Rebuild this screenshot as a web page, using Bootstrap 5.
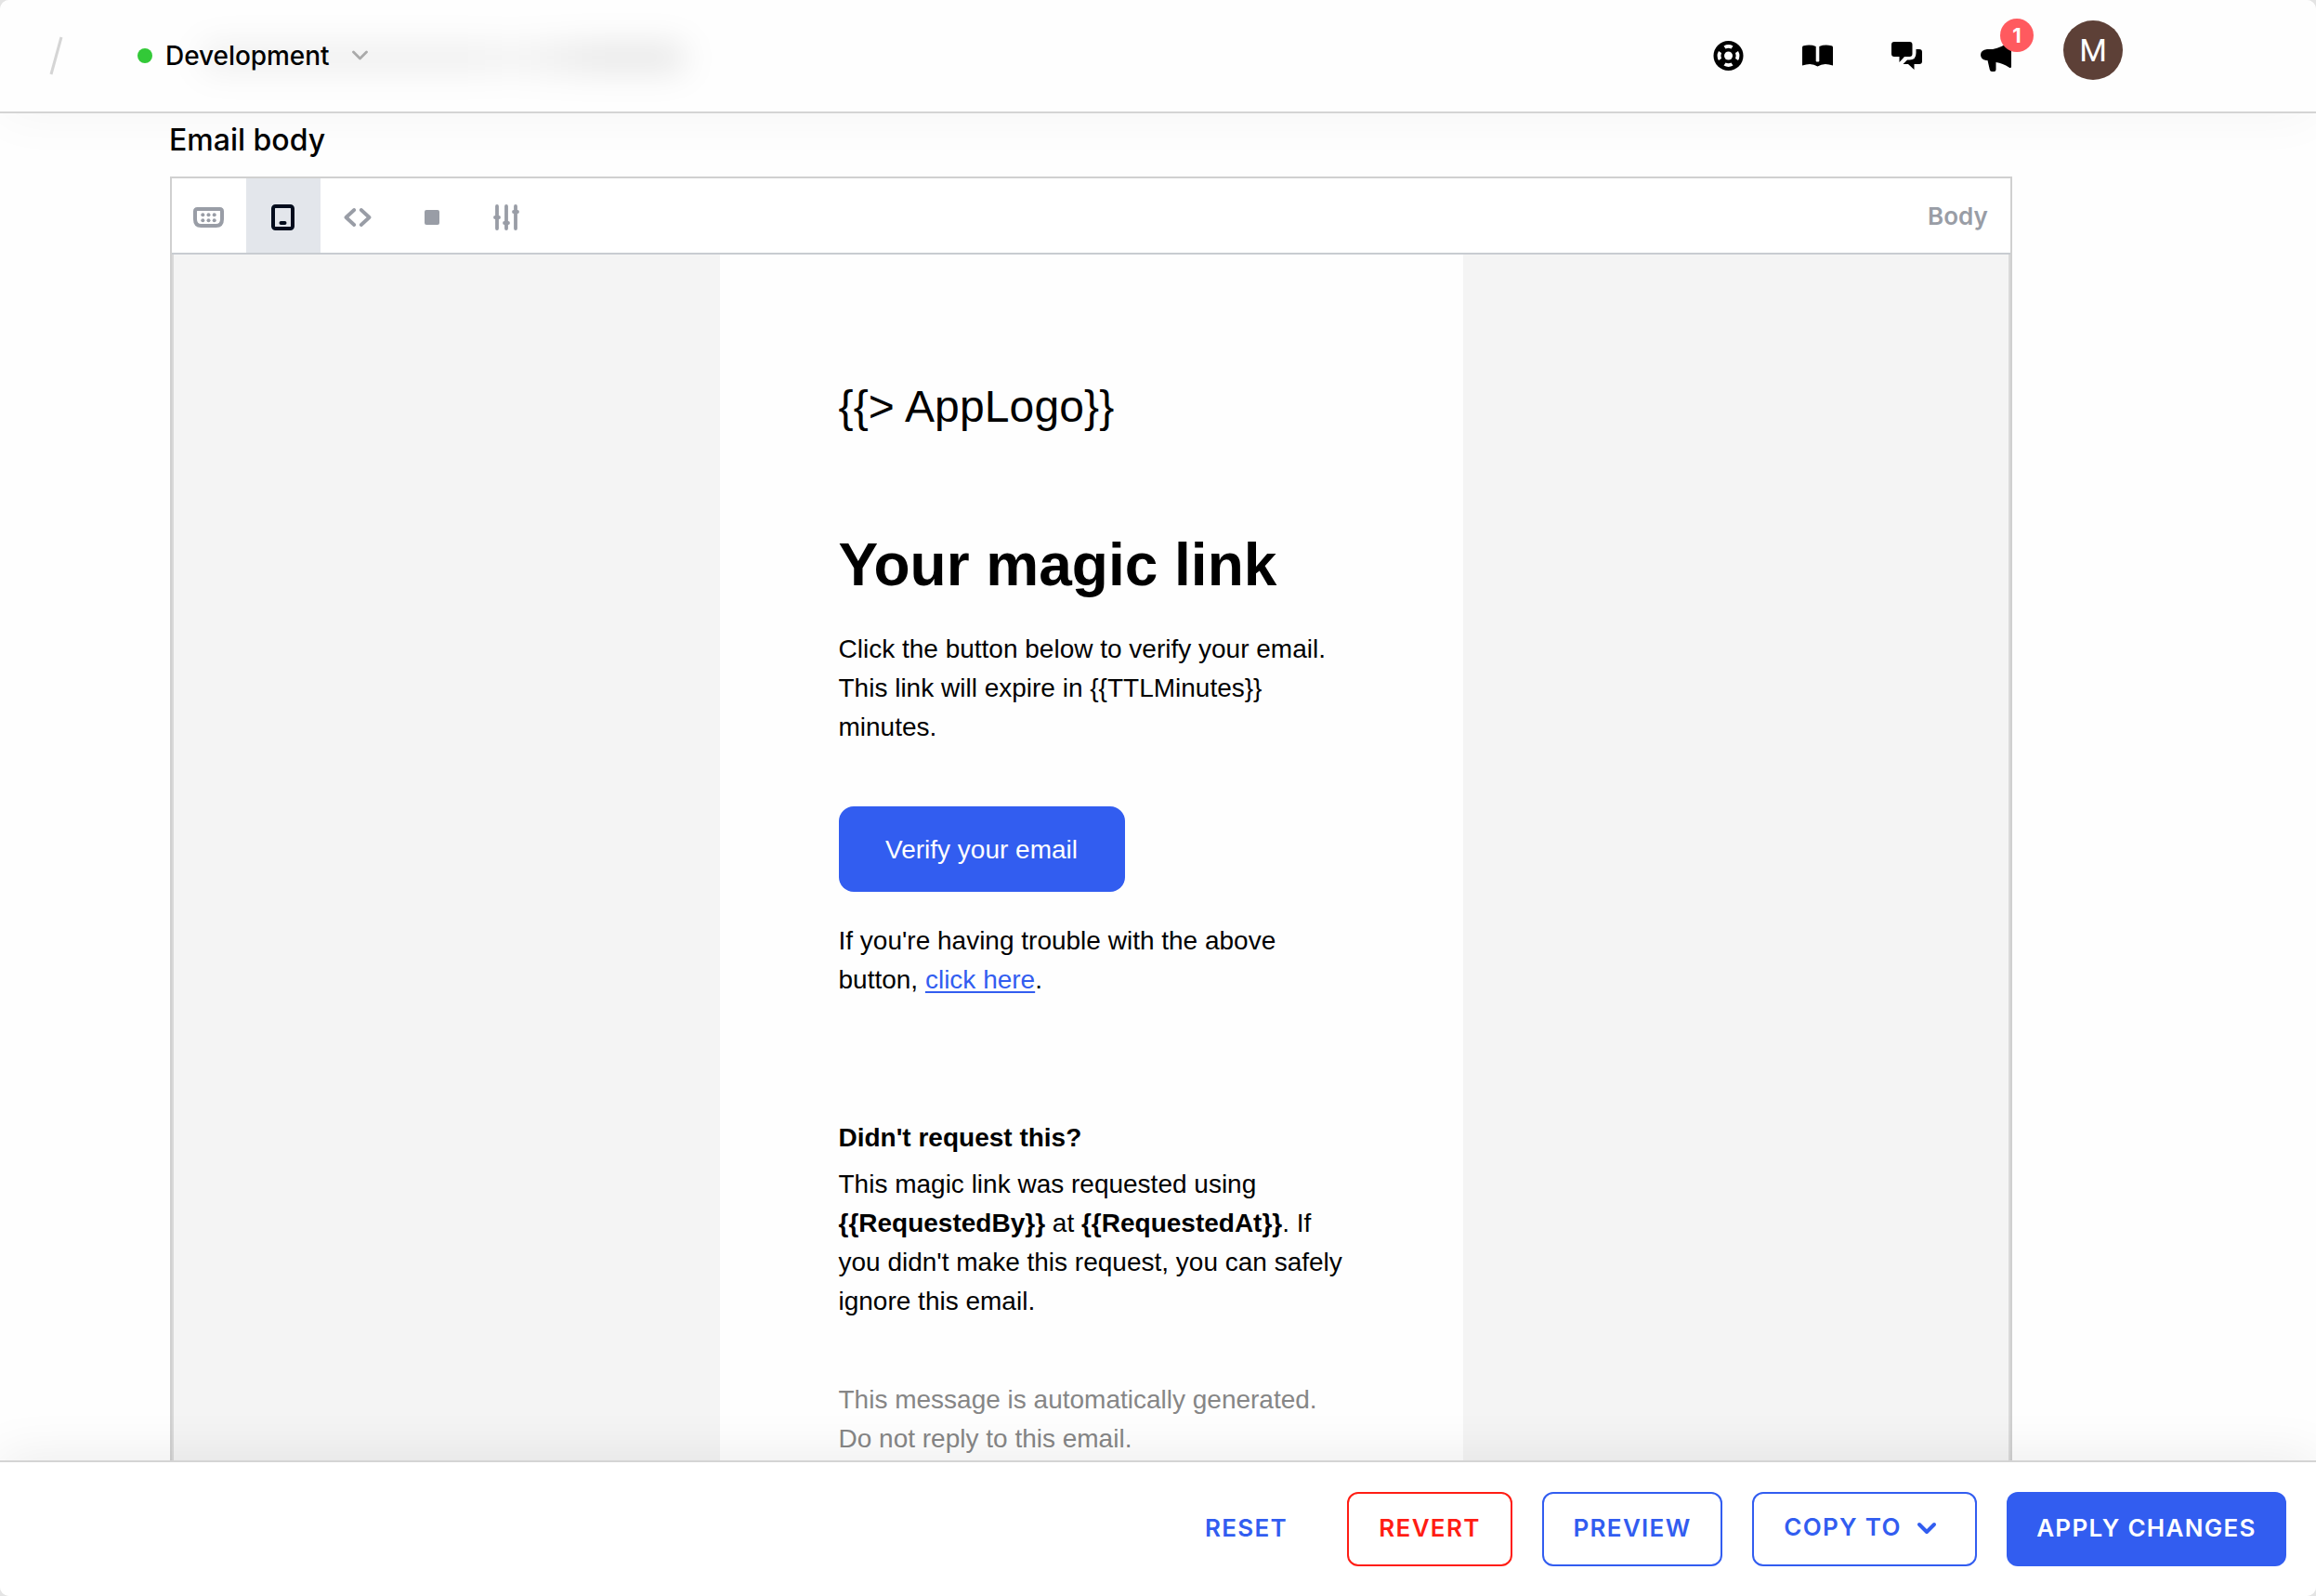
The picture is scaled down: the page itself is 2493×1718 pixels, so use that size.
<!DOCTYPE html>
<html lang="en">
<head>
<meta charset="utf-8">
<title>Email template editor</title>
<link href="https://cdn.jsdelivr.net/npm/bootstrap@5.3.0/dist/css/bootstrap.min.css" rel="stylesheet">
<script src="https://cdn.jsdelivr.net/npm/bootstrap@5.3.0/dist/js/bootstrap.bundle.min.js"></script>
<style>
:root{--brand:#325df0;--line:#d4d4d4;--muted:#999da6}
html{background:#e4e4e4}
body{width:2493px;height:1718px;overflow:hidden;border-radius:10px;background:#fefefe;color:#000;font-family:Inter,sans-serif;position:relative}
svg{display:block;flex:none}
.topbar{height:122px;border-bottom:2px solid var(--line);padding:0 208px 0 52px;box-shadow:0 4px 56px rgba(0,0,0,.04);position:relative;z-index:2;background:#fefefe}
.ghost-title{position:absolute;left:215px;top:46px;width:524px;height:32px;border-radius:16px;filter:blur(17px);background:linear-gradient(90deg,rgba(0,0,0,.06),rgba(0,0,0,.06) 55%,rgba(0,0,0,.045) 65%,rgba(0,0,0,.09) 82%,rgba(0,0,0,.09))}
.env{font-size:28px;font-weight:500;line-height:40px;margin-left:79px;position:relative}
.env-dot{width:16px;height:16px;border-radius:50%;background:#33c938;margin-right:14px}
.env-label{letter-spacing:-.05px}
.tools{gap:63px;position:relative}
.count-pill{position:absolute;left:21px;top:-23px;width:36px;height:36px;border-radius:50%;background:#ff5a5f;color:#fff;font-size:22px;font-weight:700;line-height:36px;text-align:center}
.avatar{width:64px;height:64px;border-radius:50%;background:#5d4037;color:#fff;font:400 34px/64px Roboto,sans-serif;text-align:center;margin:0 0 12px -7px}
.workspace{height:1450px;padding-left:183px;overflow:hidden}
.section-title{font-size:32px;font-weight:450;line-height:40px;margin:0 0 0 -1px;padding:9px 0 19px}
.editor{width:1983px;border:2px solid #d0d0d0;border-bottom:0}
.modes{height:82px;border-bottom:2px solid #c8ccd1;background:#fff;color:var(--muted)}
.mode{width:80px;height:80px;color:var(--muted);border:0;background:none;padding:3px 0 0}
.mode:first-child{padding-right:1px}
.mode.active{background:#e3e6eb;color:#030c1c;margin-left:-.5px}
.mode-name{font-size:26px;font-weight:600;padding:1px 24px 0 0;letter-spacing:.1px}
.preview{background:#f4f4f4;height:1298px;border:solid #d9d9d9;border-width:0 2px}
.mail{width:800px;background:#fefefe;padding:128px 128px 0 128px;font:28px/42px "Liberation Sans",Arial,sans-serif;margin-left:587.5px;white-space:nowrap}
.mail p{margin:0}
.mail-logo{font-size:48px;line-height:72px;letter-spacing:.15px}
.mail h1{font-size:64px;line-height:80px;font-weight:700;margin:94px 0 30px}
.mail-cta{width:308px;height:92px;border-radius:16px;background:var(--brand);color:#fff;font-size:28px;margin:64px 0 32px;padding:1px 0 0;border:0}
.mail a:not(.btn){color:var(--brand);text-underline-offset:3px;text-decoration-thickness:2px}
.mail .fine{color:#868686;margin-top:64px}
.mail .notice{margin-top:128px}
.actions{height:146px;border-top:2px solid var(--line);background:#fff;position:relative;z-index:2;padding:32px 32px 0 0;gap:32px;box-shadow:0 -4px 56px rgba(0,0,0,.075)}
.act{height:80px;border-radius:12px;border-width:2px;font-size:26px;font-weight:600;letter-spacing:1.3px;padding:0 0 3px;line-height:1}
.act-brand{color:var(--brand);border-color:var(--brand)}
.act-danger{color:#ff1d14;border-color:#ff1d14}
.act-reset{width:153px;color:var(--brand)}
.act-revert{width:178px}
.act-preview{width:194px}
.act-copy{width:242px;padding:0 9px 5px 0}
.act-copy svg{margin-top:3px}
.act-apply{width:301px;background:var(--brand)}
</style>
</head>
<body class="d-flex flex-column">
<header class="topbar d-flex align-items-center flex-shrink-0">
  <div class="ghost-title"></div>
  <svg width="17" height="44" viewBox="0 0 17 44"><path d="M14 2 3 42" stroke="#d5d5d5" stroke-width="3" fill="none"/></svg>
  <div class="env d-flex align-items-center"><span class="env-dot"></span><span class="env-label">Development</span>
    <svg class="ms-4" width="18" height="12" viewBox="0 0 18 12"><path d="m1.500 2 7 7 7-7" fill="none" stroke="#aaa" stroke-width="2.800" stroke-linecap="round" stroke-linejoin="round"/></svg>
  </div>
  <div class="tools d-flex align-items-center ms-auto">
    <svg width="33" height="32" viewBox="0 0 33 32"><circle cx="16.500" cy="16" r="16"/><circle cx="16.500" cy="16" r="4.500" fill="#fff"/><g fill="#fff"><path d="M11.500 5.500Q16.500 2.600 21.500 5.500L19.500 8.500Q16.500 7.200 13.500 8.500Z"/><path d="M11.500 26.500Q16.500 29.400 21.500 26.500L19.500 23.500Q16.500 24.800 13.500 23.500Z"/><path d="M6 11Q3.100 16 6 21L9 19Q7.700 16 9 13Z"/><path d="M27 11Q29.900 16 27 21L24 19Q25.300 16 24 13Z"/></g></svg>
    <svg width="33" height="24" viewBox="0 0 33 24"><path d="M0 3Q0 1.500 1.500 1.200Q9-.5 14.700 2V18Q16.500 19 18.300 18V2Q24-.5 31.500 1.200Q33 1.500 33 3V22.500Q23 19 16.500 23.500Q10 19 0 22.500Z"/></svg>
    <svg width="33" height="30" viewBox="0 0 33 30"><path d="M3 0H19.500Q22.500 0 22.500 3V13Q22.500 16 19.500 16H14L8.500 22V16H3Q0 16 0 13V3Q0 0 3 0ZM26.500 8H30Q33 8 33 11V21Q33 24 30 24H24.500V30L18 24H12.500L17 19.500H19.500Q26.500 19.500 26.500 12Z"/></svg>
    <div class="position-relative"><svg width="33" height="34" viewBox="0 0 33 34"><path d="M7 10H13Q23 8 30.500 2Q33 1 33 3.500V28.500Q33 31 30.500 29.500Q24 25 16.500 24V32Q16.500 34 14.500 34H12Q10.300 34 9.800 32L7.500 22H6Q0 21 0 16T7 10Z"/></svg><span class="count-pill">1</span></div>
    <div class="avatar">M</div>
  </div>
</header>
<main class="workspace flex-shrink-0">
  <h2 class="section-title"><span>Email body</span></h2>
  <section class="editor">
    <div class="modes d-flex align-items-center">
      <button class="mode d-flex align-items-center justify-content-center"><svg width="33" height="22" viewBox="0 0 33 22"><path d="M4.500 2H28.500Q31 2 31 4.500V13Q31 20 24.500 20H8.500Q2 20 2 13V4.500Q2 2 4.500 2Z" fill="none" stroke="currentColor" stroke-width="4"/><g fill="currentColor"><circle cx="10.300" cy="8.200" r="2"/><circle cx="16.500" cy="8.200" r="2"/><circle cx="22.700" cy="8.200" r="2"/><circle cx="10.300" cy="14.200" r="2"/><circle cx="16.500" cy="14.200" r="2"/><circle cx="22.700" cy="14.200" r="2"/></g></svg></button>
      <button class="mode active d-flex align-items-center justify-content-center"><svg width="25" height="28" viewBox="0 0 25 28"><rect x="2" y="2" width="21" height="24" rx="2.500" fill="none" stroke="currentColor" stroke-width="4"/><rect x="8.500" y="18" width="8" height="4" rx="2" fill="currentColor"/></svg></button>
      <button class="mode d-flex align-items-center justify-content-center"><svg width="30" height="20" viewBox="0 0 30 20"><path d="m11.200 2-8.700 8 8.700 8M18.800 2l8.700 8-8.700 8" fill="none" stroke="currentColor" stroke-width="3.800" stroke-linecap="round" stroke-linejoin="round"/></svg></button>
      <button class="mode d-flex align-items-center justify-content-center"><svg width="16" height="16" viewBox="0 0 16 16"><rect width="16" height="16" rx="2" fill="currentColor"/></svg></button>
      <button class="mode d-flex align-items-center justify-content-center"><svg width="28" height="28" viewBox="0 0 28 28"><path d="M4 2v24M14 2v24M24 2v24M2 14h4M12 20h4M22 8h4" stroke="currentColor" stroke-width="3.800" stroke-linecap="round"/></svg></button>
      <span class="mode-name ms-auto"><span>Body</span></span>
    </div>
    <div class="preview d-flex">
      <article class="mail">
        <p class="mail-logo"><span>{{&gt; AppLogo}}</span></p>
        <h1><span>Your magic link</span></h1>
        <p>Click the button below to verify your email.<br>This link will expire in {{TTLMinutes}}<br>minutes.</p>
        <button class="btn mail-cta d-block"><span>Verify your email</span></button>
        <p>If you're having trouble with the above<br>button, <a href="#">click here</a>.</p>
        <p class="notice"><strong>Didn't request this?</strong></p>
        <p class="pt-2">This magic link was requested using<br><strong>{{RequestedBy}}</strong> at <strong>{{RequestedAt}}</strong>. If<br>you didn't make this request, you can safely<br>ignore this email.</p>
        <p class="fine">This message is automatically generated.<br>Do not reply to this email.</p>
      </article>
    </div>
  </section>
</main>
<footer class="actions d-flex justify-content-end flex-shrink-0">
  <button class="btn act act-reset border-0"><span>RESET</span></button>
  <button class="btn act act-danger act-revert"><span>REVERT</span></button>
  <button class="btn act act-brand act-preview"><span>PREVIEW</span></button>
  <button class="btn act act-brand act-copy d-flex align-items-center justify-content-center gap-3"><span>COPY TO</span><svg width="22" height="14" viewBox="0 0 22 14"><path d="m3 3 8 8 8-8" fill="none" stroke="currentColor" stroke-width="4" stroke-linecap="round" stroke-linejoin="round"/></svg></button>
  <button class="btn act act-apply text-white"><span>APPLY CHANGES</span></button>
</footer>
</body>
</html>
